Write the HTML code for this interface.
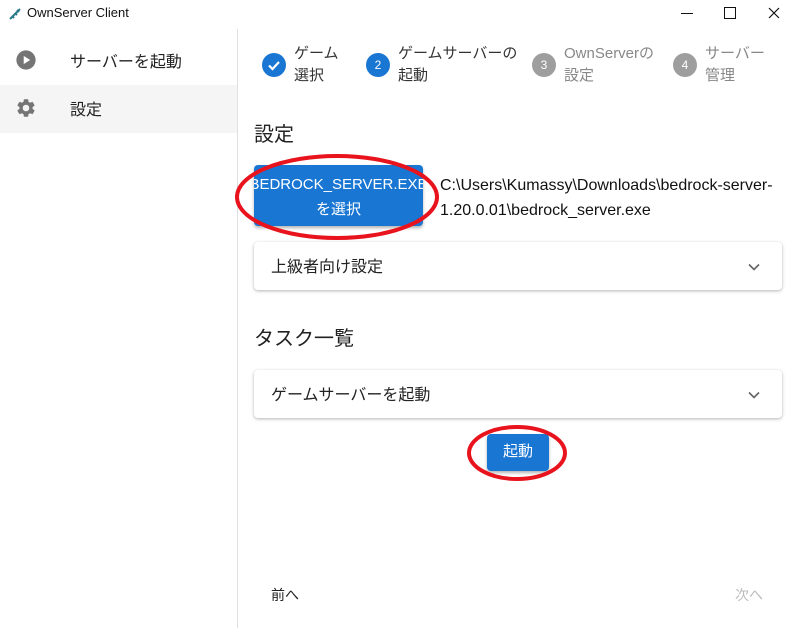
<!DOCTYPE html><html><head><meta charset="utf-8"><style>
body{margin:0;width:797px;height:628px;background:#fff;font-family:"Liberation Sans","Noto Sans CJK JP",sans-serif;position:relative;overflow:hidden;color:#222}
.a{position:absolute}
.t{font-size:15px;line-height:22px;color:#555}
.circ{width:24px;height:24px;border-radius:50%;color:#fff;font-size:12px;text-align:center;line-height:24px}
.acc{left:254px;width:528px;height:48px;background:#fff;box-shadow:0 1px 3px rgba(0,0,0,.3);border-radius:4px}
.acc span{position:absolute;left:17px;top:11px;font-size:16px;color:#222}
</style></head><body>
<svg class="a" style="left:8px;top:7px" width="14" height="14" viewBox="0 0 14 14"><path d="M2 12L12 2M4 9l2 2M7 6l2 2M9 3l2 2" stroke="#2a7a8a" stroke-width="2"/></svg>
<div class="a" style="left:27px;top:5px;font-size:13px;color:#111">OwnServer Client</div>
<div class="a" style="left:681px;top:13px;width:12px;height:1px;background:#111"></div>
<div class="a" style="left:724px;top:7px;width:10px;height:10px;border:1px solid #111"></div>
<svg class="a" style="left:768px;top:7px" width="12" height="12" viewBox="0 0 12 12"><path d="M1 1L11 11M11 1L1 11" stroke="#111" stroke-width="1.2"/></svg>
<div class="a" style="left:237px;top:29px;width:1px;height:599px;background:#e0e0e0"></div>
<div class="a" style="left:0;top:85px;width:237px;height:48px;background:#f5f5f5"></div>
<svg class="a" style="left:15px;top:49px" width="22" height="22" viewBox="0 0 24 24"><circle cx="12" cy="12" r="10.5" fill="#757575"/><path d="M9.5 7.5l7 4.5-7 4.5z" fill="#fff"/></svg>
<div class="a" style="left:70px;top:48px;font-size:16px;color:#222">サーバーを起動</div>
<svg class="a" style="left:15px;top:97px" width="22" height="22" viewBox="0 0 24 24"><path fill="#757575" d="M19.14 12.94c.04-.3.06-.61.06-.94 0-.32-.02-.64-.07-.94l2.030-1.58a.49.49 0 0 0 .12-.61l-1.92-3.32a.49.49 0 0 0-.59-.22l-2.39.96c-.5-.38-1.030-.7-1.62-.94l-.36-2.54a.48.48 0 0 0-.48-.41h-3.84a.48.48 0 0 0-.47.41l-.36 2.54c-.59.24-1.13.57-1.62.94l-2.39-.96a.48.48 0 0 0-.59.22L2.74 8.87a.47.47 0 0 0 .12.61l2.030 1.58c-.05.3-.09.63-.09.94s.2.64.07.94l-2.030 1.58a.49.49 0 0 0-.12.61l1.92 3.32c.12.22.37.29.59.22l2.39-.96c.5.38 1.030.7 1.62.94l.36 2.54c.05.24.24.41.48.41h3.84c.24 0 .44-.17.47-.41l.36-2.54c.59-.24 1.13-.56 1.62-.94l2.39.96c.22.08.47 0 .59-.22l1.92-3.32c.12-.22.07-.47-.12-.61l-2.010-1.58zM12 15.6A3.6 3.6 0 1 1 12 8.4a3.6 3.6 0 0 1 0 7.2z"/></svg>
<div class="a" style="left:70px;top:96px;font-size:16px;color:#222">設定</div>
<div class="a circ" style="left:262px;top:53px;background:#1976d2"><svg width="24" height="24" viewBox="0 0 24 24"><path d="M7 12.5l3.5 3.5L17 9" stroke="#fff" stroke-width="2.2" fill="none"/></svg></div>
<div class="a t" style="left:294px;top:43px;color:#333">ゲーム<br>選択</div>
<div class="a circ" style="left:366px;top:53px;background:#1976d2">2</div>
<div class="a t" style="left:398px;top:43px;color:#333">ゲームサーバーの<br>起動</div>
<div class="a circ" style="left:532px;top:53px;background:#9e9e9e">3</div>
<div class="a t" style="left:564px;top:43px;color:#888">OwnServerの<br>設定</div>
<div class="a circ" style="left:673px;top:53px;background:#9e9e9e">4</div>
<div class="a t" style="left:705px;top:43px;color:#888">サーバー<br>管理</div>
<div class="a" style="left:254px;top:118px;font-size:20px">設定</div>
<div class="a" style="left:254px;top:165px;width:169px;height:61px;background:#1976d2;border-radius:4px;box-shadow:0 2px 3px rgba(0,0,0,.3);color:#fff;font-size:15px;text-align:center;line-height:25px;padding-top:7px;box-sizing:border-box;overflow:hidden;white-space:nowrap"><div style="margin-left:-12px;margin-right:-12px">BEDROCK_SERVER.EXE</div>を選択</div>
<div class="a" style="left:440px;top:173px;font-size:16px;line-height:25px;color:#111">C:\Users\Kumassy\Downloads\bedrock-server-<br>1.20.0.01\bedrock_server.exe</div>
<div class="a acc" style="top:242px"><span>上級者向け設定</span></div>
<div class="a acc" style="top:370px"><span>ゲームサーバーを起動</span></div>
<svg class="a" style="left:744px;top:257px" width="20" height="20" viewBox="0 0 24 24"><path d="M6 9l6 6 6-6" stroke="#666" stroke-width="2" fill="none"/></svg>
<svg class="a" style="left:744px;top:385px" width="20" height="20" viewBox="0 0 24 24"><path d="M6 9l6 6 6-6" stroke="#666" stroke-width="2" fill="none"/></svg>
<div class="a" style="left:254px;top:322px;font-size:20px">タスク一覧</div>
<div class="a" style="left:487px;top:434px;width:62px;height:37px;background:#1976d2;border-radius:4px;box-shadow:0 2px 3px rgba(0,0,0,.3);color:#fff;font-size:15px;text-align:center;line-height:35px">起動</div>
<svg class="a" style="left:0;top:0" width="797" height="628"><ellipse cx="337" cy="197" rx="100" ry="41" fill="none" stroke="#e8131c" stroke-width="4"/><ellipse cx="517" cy="453" rx="48" ry="26" fill="none" stroke="#e8131c" stroke-width="4"/></svg>
<div class="a" style="left:271px;top:585px;font-size:14px;color:#222">前へ</div>
<div class="a" style="left:735px;top:585px;font-size:14px;color:#bbb">次へ</div>
</body></html>
